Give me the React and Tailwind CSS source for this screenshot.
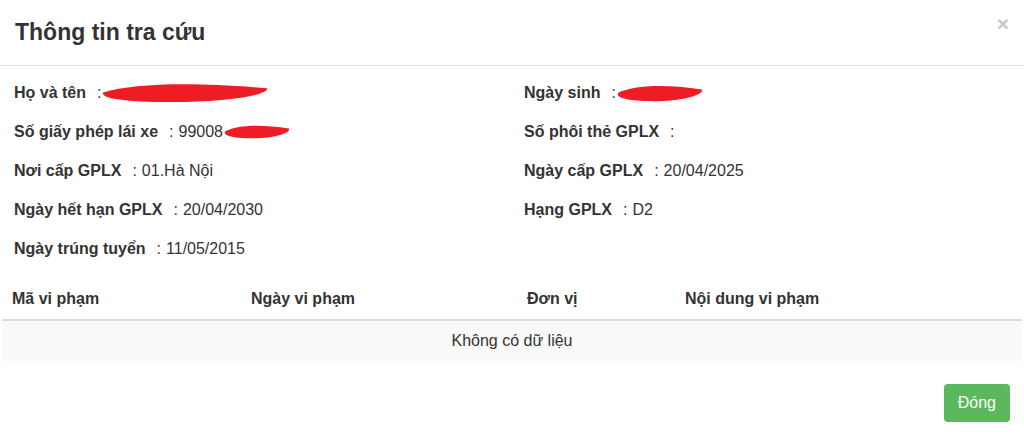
const font = { fontFamily: '"Liberation Sans", Arial, sans-serif' };

function Scribble({ w, h }) {
  return (
    <svg width={w} height={h} viewBox={`0 0 ${w} ${h}`} className="inline-block align-middle">
      <path
        d={`M2 ${h * 0.5} C ${w * 0.2} ${h * 0.05}, ${w * 0.55} ${h * 0.0}, ${w - 2} ${h * 0.3} C ${w} ${h * 0.65}, ${w * 0.7} ${h}, ${w * 0.35} ${h * 0.95} C ${w * 0.15} ${h * 0.92}, 0 ${h * 0.8}, 2 ${h * 0.5} Z`}
        fill="#ee1c25"
      />
    </svg>
  );
}

function Field({ label, value, extra }) {
  return (
    <div className="flex h-[39px] items-center text-[16px] text-[#333]">
      <span className="font-bold">{label}</span>
      <span className="ml-[11px]">:</span>
      {value && <span className="ml-[5px]">{value}</span>}
      {extra}
    </div>
  );
}

export default function App() {
  return (
    <div className="w-[1024px] h-[436px] overflow-hidden bg-white" style={font}>
      <div className="flex h-[66px] items-center justify-between border-b border-[#e5e5e5] px-[15px]">
        <h4 className="text-[23px] font-bold text-[#333]">Thông tin tra cứu</h4>
        <button className="mr-[0px] mb-[18px] text-[21px] font-bold leading-none text-[#c8c8c8]">×</button>
      </div>

      <div className="grid grid-cols-2 px-[14px] pt-[7px]">
        <div>
          <Field label="Họ và tên" extra={<Scribble w={168} h={21} />} />
          <Field label="Số giấy phép lái xe" value="99008" extra={<Scribble w={68} h={15} />} />
          <Field label="Nơi cấp GPLX" value="01.Hà Nội" />
          <Field label="Ngày hết hạn GPLX" value="20/04/2030" />
          <Field label="Ngày trúng tuyển" value="11/05/2015" />
        </div>
        <div className="pl-[12px]">
          <Field label="Ngày sinh" extra={<Scribble w={88} h={18} />} />
          <Field label="Số phôi thẻ GPLX" />
          <Field label="Ngày cấp GPLX" value="20/04/2025" />
          <Field label="Hạng GPLX" value="D2" />
        </div>
      </div>

      <div className="mt-[11px] px-[2px]">
        <table className="w-full border-collapse text-[16px] text-[#333]">
          <thead>
            <tr className="border-b-2 border-[#ddd]">
              <th className="w-[239px] px-[10px] py-[8px] text-left font-bold">Mã vi phạm</th>
              <th className="w-[276px] px-[10px] py-[8px] text-left font-bold">Ngày vi phạm</th>
              <th className="w-[158px] px-[10px] py-[8px] text-left font-bold">Đơn vị</th>
              <th className="px-[10px] py-[8px] text-left font-bold">Nội dung vi phạm</th>
            </tr>
          </thead>
          <tbody>
            <tr className="bg-[#f9f9f9]">
              <td colSpan={4} className="h-[41px] text-center">Không có dữ liệu</td>
            </tr>
          </tbody>
        </table>
      </div>

      <div className="flex justify-end px-[14px] pt-[23px]">
        <button className="h-[38px] rounded-[4px] bg-[#5cb85c] px-[14px] text-[16px] text-white">Đóng</button>
      </div>
    </div>
  );
}
